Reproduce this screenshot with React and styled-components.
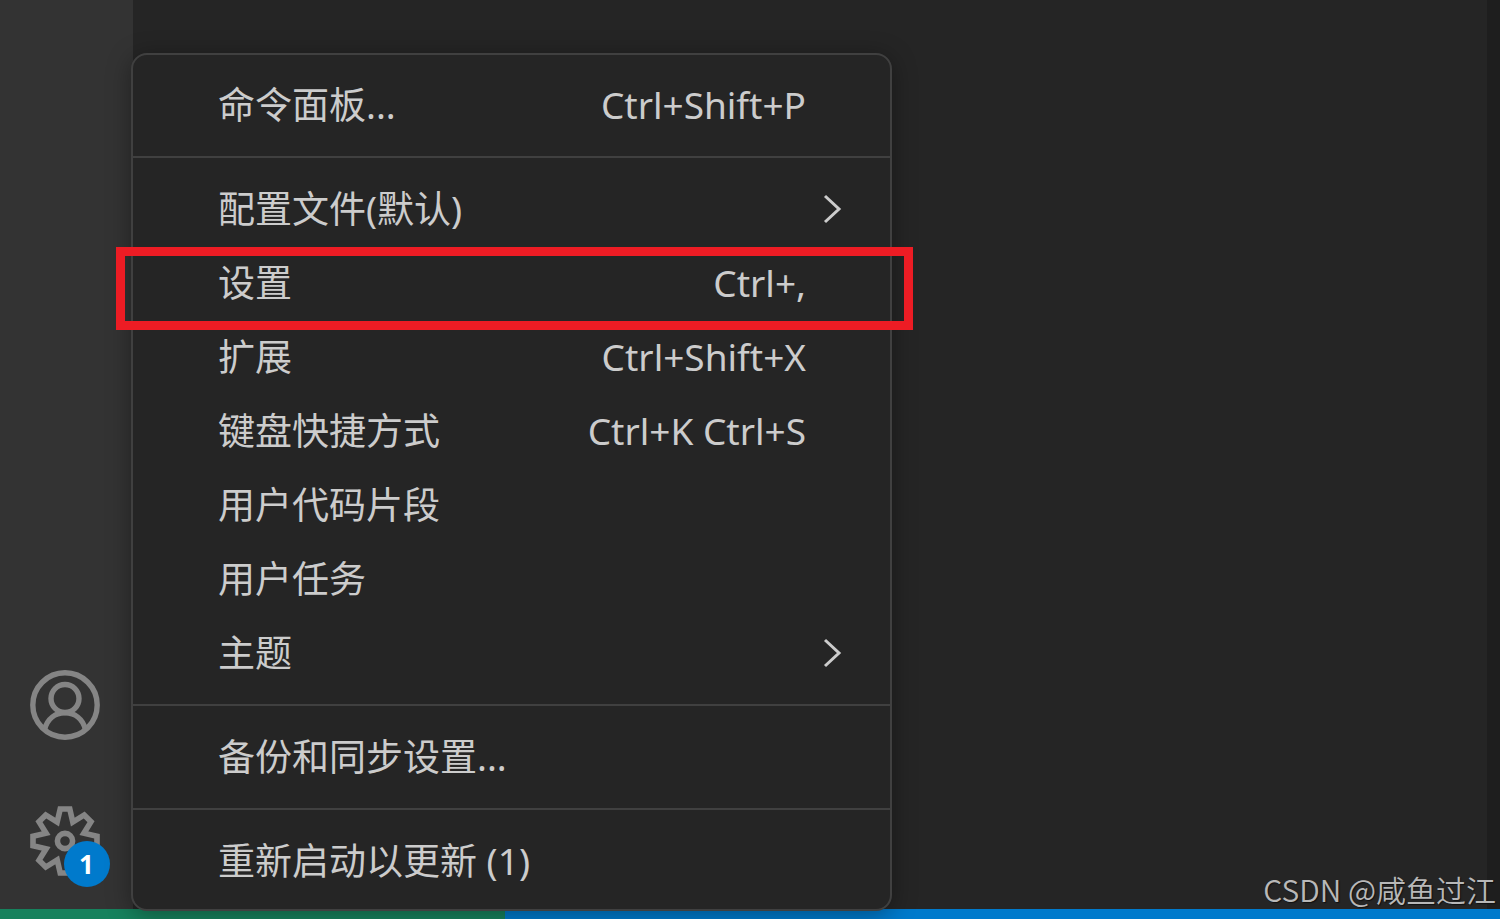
import React from "react";
import styled, { createGlobalStyle } from "styled-components";

const GlobalStyle = createGlobalStyle`
  * {
    box-sizing: border-box;
  }

  body {
    margin: 0;
    background: #252525;
    font-family: "Noto Sans", "Noto Sans CJK SC", sans-serif;
  }
`;

const Window = styled.div`
  position: relative;
  display: flex;
  flex-direction: column;
  height: 100vh;
  overflow: hidden;
`;

const Workbench = styled.div`
  display: flex;
  flex: 1;
  min-height: 0;
`;

const ActivityBar = styled.nav`
  display: flex;
  flex-direction: column;
  justify-content: flex-end;
  align-items: center;
  gap: 64px;
  width: 133px;
  padding: 0 4px 32px 0;
  background: #333333;
`;

const ActivityButton = styled.button`
  position: relative;
  display: flex;
  width: 72px;
  height: 72px;
  padding: 0;
  border: none;
  background: none;
  color: #858585;
  cursor: pointer;
`;

const ActivityIcon = styled.svg`
  width: 72px;
  height: 72px;
  fill: none;
  stroke: currentColor;
`;

const Badge = styled.span`
  position: absolute;
  right: -9px;
  bottom: -10px;
  width: 46px;
  height: 46px;
  border-radius: 50%;
  background: #007acc;
  color: #ffffff;
  font-family: "Open Sans", sans-serif;
  font-size: 26px;
  font-weight: 700;
  line-height: 46px;
  text-align: center;
`;

const Editor = styled.main`
  flex: 1;
  background: #252525;
`;

const Gutter = styled.div`
  width: 13px;
  background: #1e1e1e;
`;

const StatusBar = styled.footer`
  display: flex;
  height: 10px;
  background: #007acc;
`;

const Remote = styled.div`
  width: 505px;
  background: #16825d;
`;

const Menu = styled.div`
  position: absolute;
  left: 131px;
  bottom: 8px;
  width: 761px;
  border: 2px solid #404040;
  border-radius: 16px;
  background: #252525;
  box-shadow: 0 4px 24px rgba(0, 0, 0, 0.36);
`;

const Group = styled.div`
  padding: 14px 0;

  & + & {
    border-top: 2px solid #404040;
  }

  &:first-child {
    padding-top: 13px;
  }

  &:last-child {
    padding-bottom: 11px;
  }
`;

const Item = styled.button`
  position: relative;
  display: flex;
  align-items: center;
  width: 100%;
  height: 74px;
  padding: 0 84px 0 85px;
  border: none;
  background: none;
  color: #cccccc;
  font-family: inherit;
  font-size: 37px;
  line-height: 54px;
  text-align: left;
  cursor: pointer;
`;

const Label = styled.span`
  flex: 1;
`;

const Shortcut = styled.span`
  line-height: 52px;
  white-space: nowrap;
`;

const Chevron = styled.svg`
  width: 20px;
  height: 32px;
  margin-right: -36px;
  fill: none;
  stroke: #cccccc;
  stroke-width: 3;
`;

const Highlight = styled.span`
  position: absolute;
  top: 1px;
  right: -23px;
  bottom: -10px;
  left: -17px;
  border: 9px solid #ed1c24;
  pointer-events: none;
`;

const Watermark = styled.div`
  position: absolute;
  right: 4px;
  bottom: 8px;
  color: #b8b8b8;
  font-family: "Noto Sans CJK SC", sans-serif;
  font-size: 30px;
  font-weight: 350;
  line-height: 44px;
  text-shadow: 1px 1px 1px #111111;
`;

const groups = [
  [{ label: "命令面板...", keys: "Ctrl+Shift+P" }],
  [
    { label: "配置文件(默认)", submenu: true },
    { label: "设置", keys: "Ctrl+,", highlighted: true },
    { label: "扩展", keys: "Ctrl+Shift+X" },
    { label: "键盘快捷方式", keys: "Ctrl+K Ctrl+S" },
    { label: "用户代码片段" },
    { label: "用户任务" },
    { label: "主题", submenu: true },
  ],
  [{ label: "备份和同步设置..." }],
  [{ label: "重新启动以更新 (1)" }],
];

const toothAngles = [0, 45, 90, 135, 180, 225, 270, 315];

const rotate = (x, y, deg) => {
  const a = (deg * Math.PI) / 180;
  return [x * Math.cos(a) - y * Math.sin(a), x * Math.sin(a) + y * Math.cos(a)];
};

const gearPoints = toothAngles
  .flatMap((deg) => [
    rotate(-4.8, -32, deg),
    rotate(4.8, -32, deg),
    rotate(7.8, -18.9, deg),
  ])
  .map(([x, y]) => `${x.toFixed(2)},${y.toFixed(2)}`)
  .join(" ");

const AccountIcon = () => (
  <ActivityIcon viewBox="-36 -36 72 72" strokeWidth="5.4">
    <circle r="32.2" />
    <circle cy="-6.5" r="14" />
    <path d="M-20.5 24.5C-17.5 13.5 -9.5 7.8 0 7.8S17.5 13.5 20.5 24.5" />
  </ActivityIcon>
);

const GearIcon = () => (
  <ActivityIcon viewBox="-36 -36 72 72" strokeWidth="5.6">
    <polygon points={gearPoints} />
    <circle r="7.6" />
  </ActivityIcon>
);

const App = () => {
  return (
    <Window>
      <GlobalStyle />
      <Workbench>
        <ActivityBar>
          <ActivityButton aria-label="帐户">
            <AccountIcon />
          </ActivityButton>
          <ActivityButton aria-label="管理">
            <GearIcon />
            <Badge>1</Badge>
          </ActivityButton>
        </ActivityBar>
        <Editor />
        <Gutter />
      </Workbench>
      <StatusBar>
        <Remote />
      </StatusBar>
      <Menu role="menu">
        {groups.map((items, i) => (
          <Group key={i} role="group">
            {items.map((item) => (
              <Item key={item.label} role="menuitem">
                <Label>{item.label}</Label>
                {item.keys && <Shortcut>{item.keys}</Shortcut>}
                {item.submenu && (
                  <Chevron viewBox="0 0 20 32">
                    <path d="M3 3 L17 16 L3 29" />
                  </Chevron>
                )}
                {item.highlighted && <Highlight />}
              </Item>
            ))}
          </Group>
        ))}
      </Menu>
      <Watermark>CSDN @咸鱼过江</Watermark>
    </Window>
  );
};

export default App;
